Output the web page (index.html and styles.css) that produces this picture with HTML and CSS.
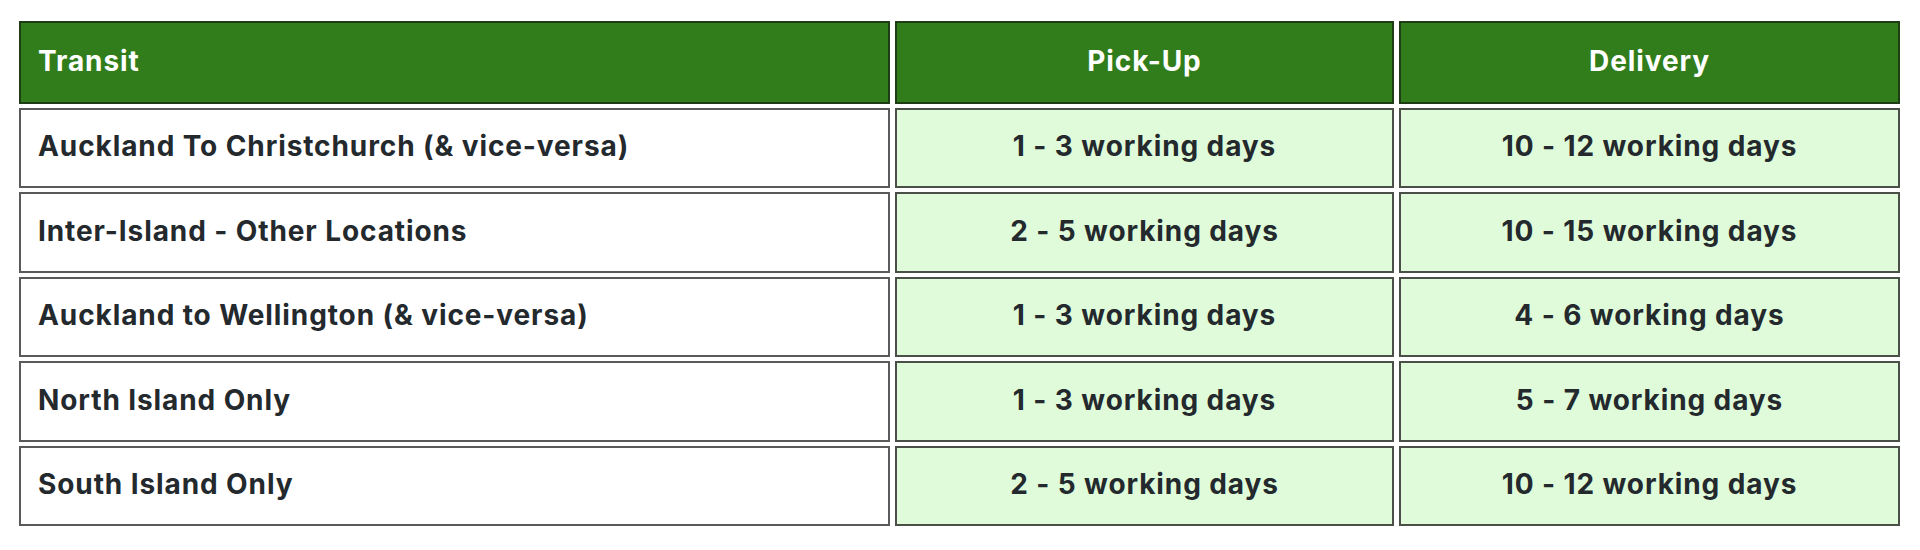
FILE: index.html
```html
<!DOCTYPE html>
<html lang="en">
<head>
<meta charset="utf-8">
<title>Transit times</title>
<link rel="stylesheet" href="styles.css">
</head>
<body>
<div class="wrap">
  <table class="transit-table">
    <thead>
      <tr>
        <th class="col-transit">Transit</th>
        <th class="col-pickup">Pick-Up</th>
        <th class="col-delivery">Delivery</th>
      </tr>
    </thead>
    <tbody>
      <tr>
        <td class="route">Auckland To Christchurch (&amp; vice-versa)</td>
        <td class="time">1 - 3 working days</td>
        <td class="time">10 - 12 working days</td>
      </tr>
      <tr>
        <td class="route">Inter-Island - Other Locations</td>
        <td class="time">2 - 5 working days</td>
        <td class="time">10 - 15 working days</td>
      </tr>
      <tr>
        <td class="route">Auckland to Wellington (&amp; vice-versa)</td>
        <td class="time">1 - 3 working days</td>
        <td class="time">4 - 6 working days</td>
      </tr>
      <tr>
        <td class="route">North Island Only</td>
        <td class="time">1 - 3 working days</td>
        <td class="time">5 - 7 working days</td>
      </tr>
      <tr>
        <td class="route">South Island Only</td>
        <td class="time">2 - 5 working days</td>
        <td class="time">10 - 12 working days</td>
      </tr>
    </tbody>
  </table>
</div>
</body>
</html>
```

FILE: styles.css
```css
html, body {
  margin: 0;
  padding: 0;
  background: #ffffff;
}

.wrap {
  padding: 17px 15px 0 14px;
}

.transit-table {
  width: 100%;
  border-collapse: separate;
  border-spacing: 5px 4px;
  table-layout: fixed;
  font-family: Inter, "Open Sans", "Liberation Sans", sans-serif;
  font-weight: 700;
  font-size: 28px;
  letter-spacing: 0.9px;
  color: #23292d;
}

.transit-table th,
.transit-table td {
  border: 2px solid #3d3d3d;
  padding: 0 17px 3px;
  box-sizing: border-box;
  vertical-align: middle;
}

.transit-table th {
  height: 82.5px;
  background: #317d1b;
  color: #ffffff;
  border-color: #1e3d14;
  text-align: center;
}

.transit-table th.col-transit {
  text-align: left;
}

.col-transit { width: 871px; }
.col-pickup { width: 499px; }
.col-delivery { width: auto; }

.transit-table td {
  height: 80.5px;
}

.transit-table td.route {
  background: #ffffff;
  text-align: left;
  border-color: #5a5a5a;
}

.transit-table td.time {
  background: #e0fbd9;
  text-align: center;
  border-color: #4a4f48;
}
```
